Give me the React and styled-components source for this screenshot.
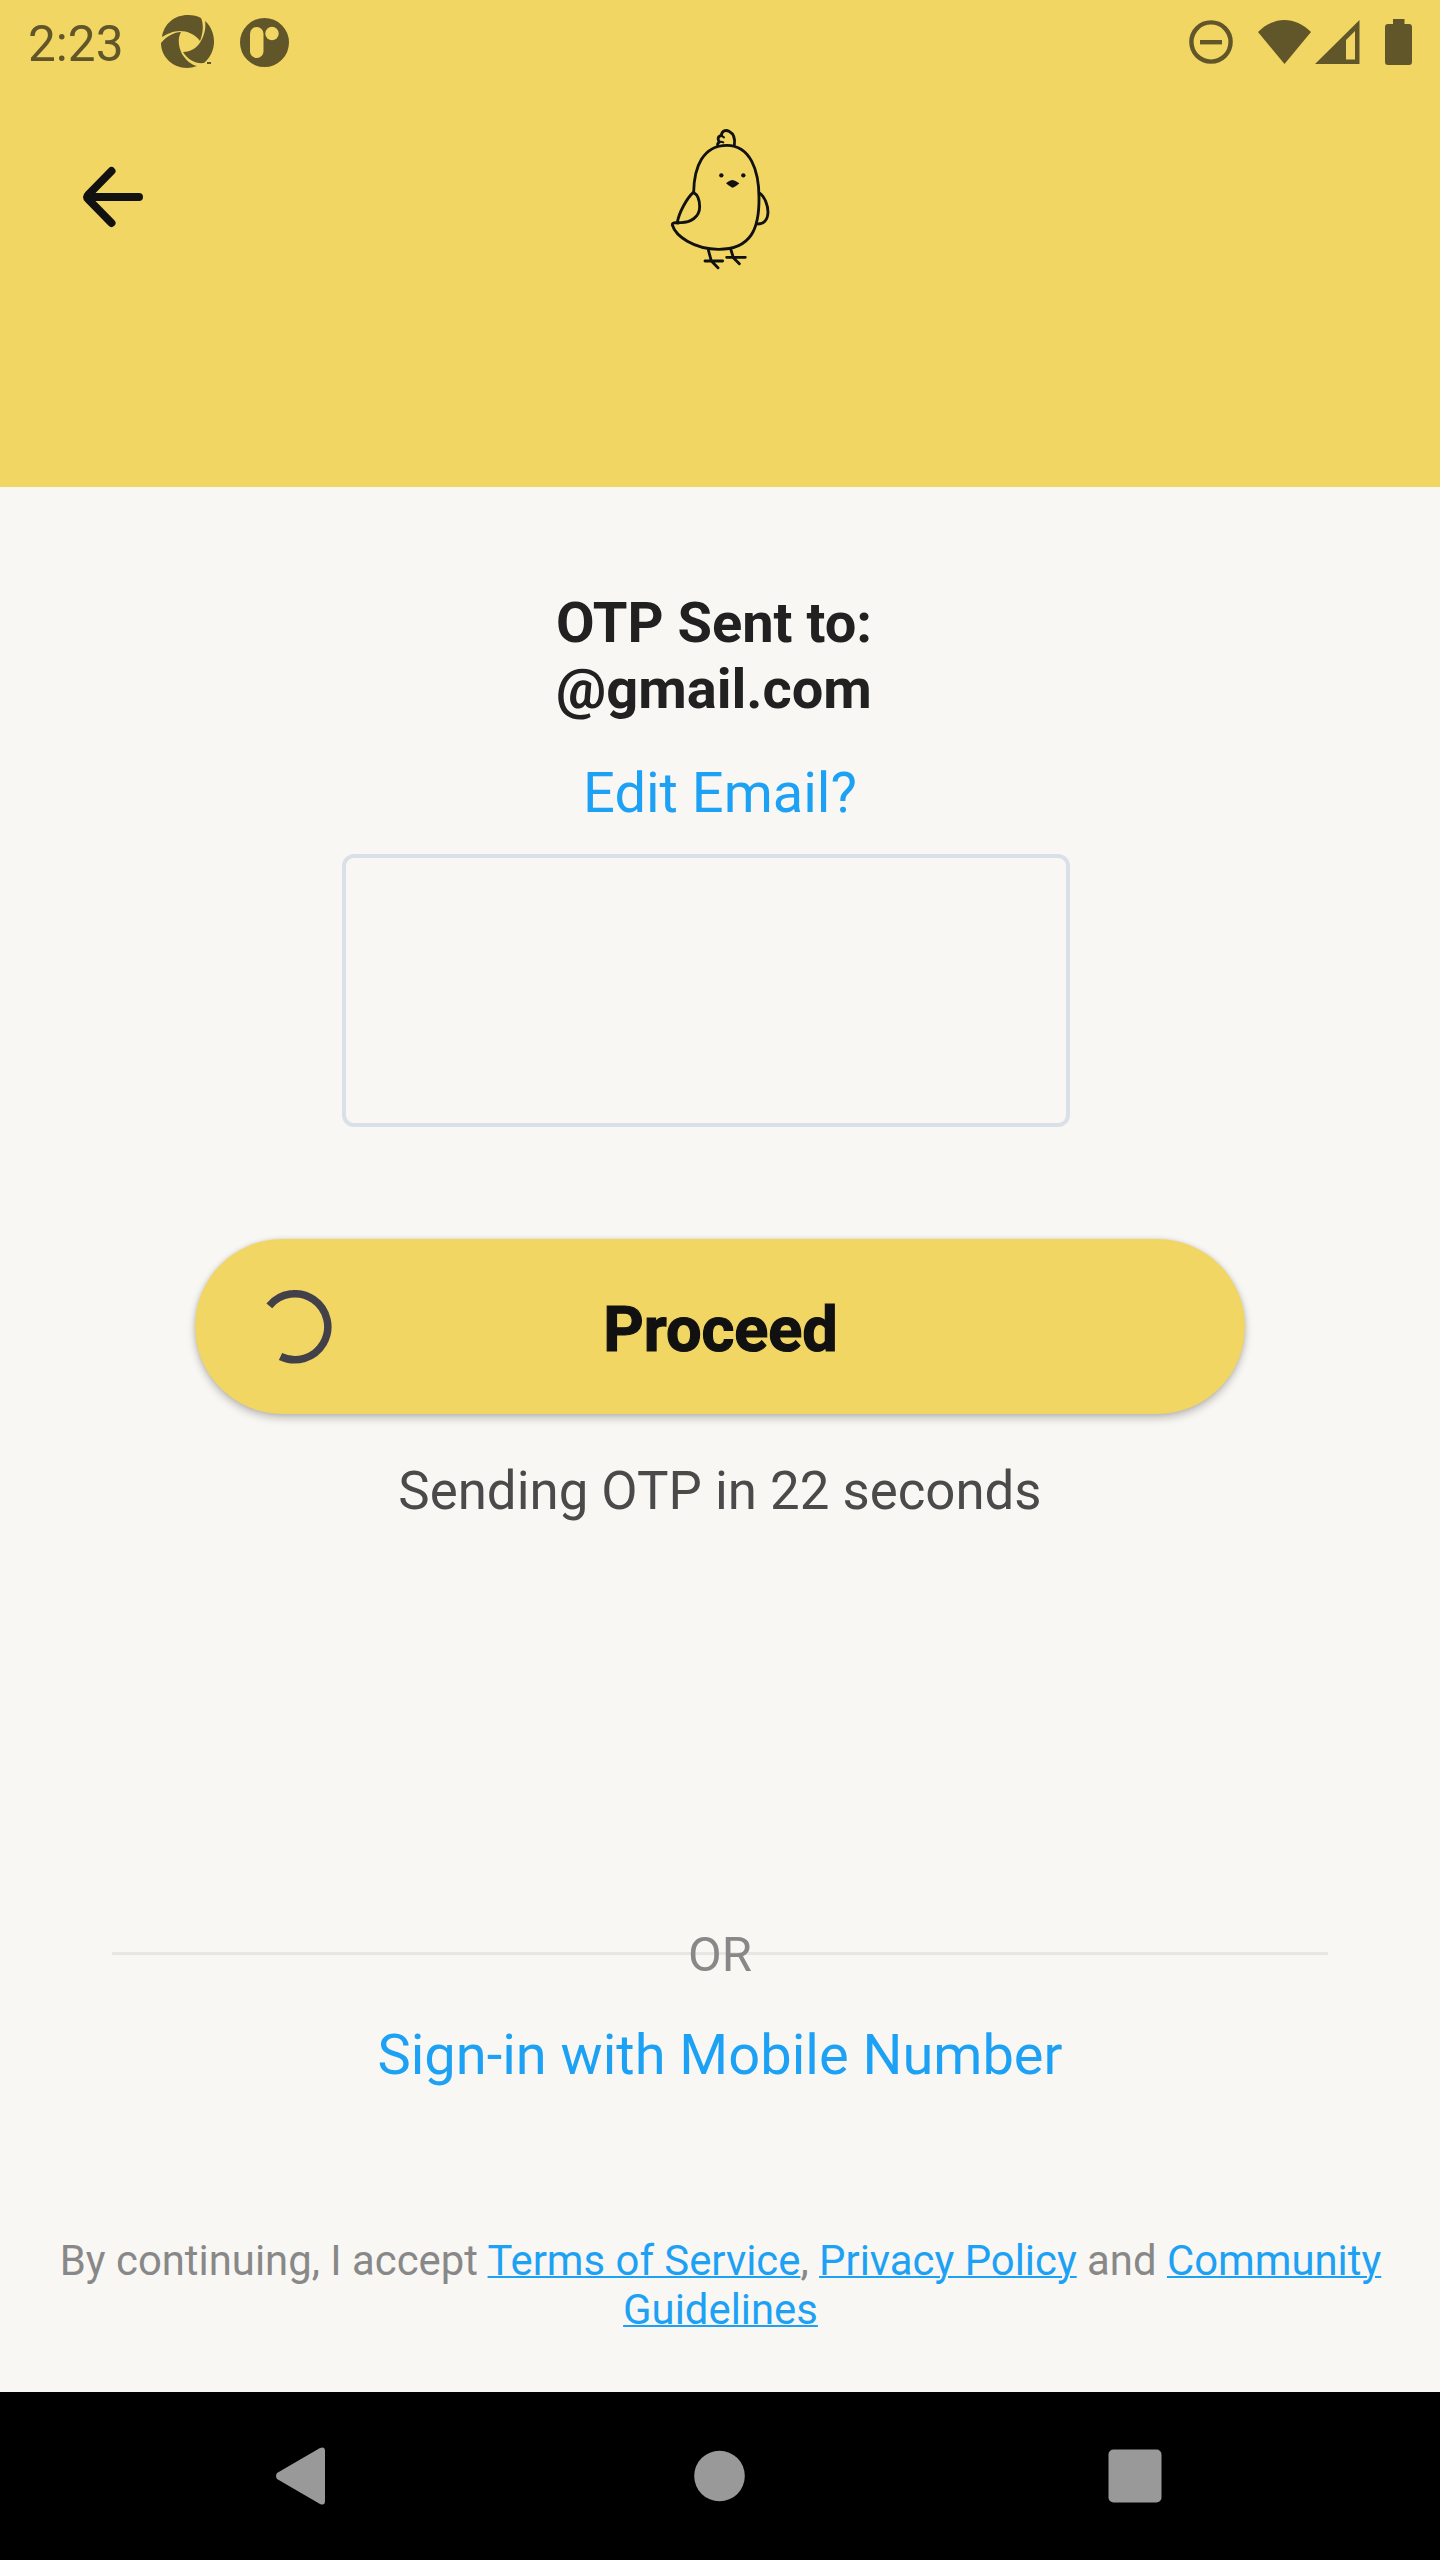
import React from "react";
import styled, { createGlobalStyle } from "styled-components";

const Global = createGlobalStyle`
  * { box-sizing: border-box; }
  body { margin: 0; background: #f8f7f3; font-family: Roboto, "Liberation Sans", sans-serif; }
  button { border: 0; padding: 0; background: none; font: inherit; color: inherit; }
  svg { display: block; }
`;

const Screen = styled.div`
  width: 1440px;
  height: 2560px;
  display: flex;
  flex-direction: column;
  overflow: hidden;
  background: #f8f7f3;
`;

const Header = styled.header`
  height: 487px;
  flex: none;
  background: #f1d663;
`;

const StatusBar = styled.div`
  height: 84px;
  display: flex;
  align-items: center;
  justify-content: space-between;
  padding: 0 28px;
  color: #615629;
`;

const StatusGroup = styled.div`
  display: flex;
  align-items: center;
`;

const Clock = styled.span`
  width: 133px;
  font-size: 49.5px;
  line-height: 60px;
  padding-top: 4px;
`;

const StatusIcon = styled.span`
  margin-left: ${(p) => p.$gap}px;
`;

const AppBar = styled.div`
  display: grid;
  grid-template-columns: 1fr auto 1fr;
  height: 225px;
`;

const BackButton = styled.button`
  justify-self: start;
  align-self: start;
  margin: 80px 0 0 80px;
`;

const ChickSlot = styled.div`
  padding-top: 31px;
`;

const Main = styled.main`
  flex: 1;
  display: flex;
  flex-direction: column;
  align-items: center;
`;

const SentTo = styled.h1`
  margin: 103px 12px 0 0;
  font-size: 56px;
  line-height: 66px;
  font-weight: 700;
  color: #212121;
`;

const TextLink = styled.button`
  margin-top: ${(p) => p.$top}px;
  font-size: 56px;
  line-height: 66px;
  color: #1da1f5;
`;

const OtpField = styled.input`
  width: 728px;
  height: 273px;
  margin: 28px 28px 0 0;
  border: 4px solid #d9e0e7;
  border-radius: 12px;
  background: transparent;
  outline: none;
`;

const Proceed = styled.button`
  width: 1050px;
  height: 175px;
  margin-top: 112px;
  display: grid;
  grid-template-columns: 1fr auto 1fr;
  align-items: center;
  border-radius: 88px;
  background: #f1d663;
  box-shadow: 0 4px 8px rgba(0, 0, 0, 0.24), 0 0 4px rgba(0, 0, 0, 0.1);
  font-size: 63px;
  font-weight: 700;
  color: #111;
`;

const SpinnerSlot = styled.span`
  padding-left: 63px;
`;

const ProceedLabel = styled.span`
  padding: 6px 0 0 1px;
  -webkit-text-stroke: 1.2px #111;
`;

const Countdown = styled.p`
  margin: 45px 0 0;
  font-size: 52.8px;
  line-height: 64px;
  color: #4a4a4a;
`;

const Divider = styled.div`
  width: 1216px;
  margin-top: 403px;
  display: grid;
  justify-items: center;
  align-items: center;
  color: #888;
  font-size: 49px;
  line-height: 58px;
`;

const Rule = styled.span`
  grid-area: 1 / 1;
  width: 100%;
  height: 3px;
  margin-bottom: 3px;
  background: #e7e7e2;
`;

const DividerLabel = styled.span`
  grid-area: 1 / 1;
`;

const Legal = styled.p`
  width: 1340px;
  margin: 148px 0 0 1px;
  text-align: center;
  font-size: 41.85px;
  line-height: 49px;
  color: #888;
`;

const LegalLink = styled.a`
  color: #1da1f5;
  text-decoration: underline;
  text-decoration-thickness: 2px;
`;

const NavBar = styled.nav`
  height: 168px;
  flex: none;
  display: flex;
  align-items: center;
  justify-content: space-between;
  padding: 0 278px 0 275px;
  background: #000;
`;

const PinwheelIcon = () => (
  <svg width="54" height="54" viewBox="0 0 54 54" fill="currentColor">
    <path d="M1 22C3 9 13 0 27 0C32 0 37 1 40 3C43 9 42 19 39 26C34 19 26 16 19 16C12 16 6 19 1 22Z" />
    <path d="M0 28C6 21 13 17 20 17C16 24 18 33 21 39C25 45 30 50 36 51C18 58 0 45 0 28Z" />
    <path d="M22 37C31 37 38 31 41 24C44 18 45 11 44 6C50 11 53 19 53 27C53 35 49 43 43 48C35 49 27 45 22 37Z" />
    <path d="M46 47h4v2h-4z" />
  </svg>
);

const RoundLogoIcon = () => (
  <svg width="49" height="49" viewBox="0 0 49 49">
    <circle cx="24.5" cy="24.5" r="24.5" fill="#615629" />
    <rect x="10" y="9" width="13.5" height="31" rx="6.7" fill="#f1d663" />
    <circle cx="32" cy="15.5" r="6.7" fill="#f1d663" />
  </svg>
);

const DndIcon = () => (
  <svg width="44" height="45" viewBox="0 0 44 45" fill="none" stroke="currentColor" strokeWidth="4.4">
    <circle cx="22" cy="22" r="19.6" />
    <path d="M11 22.200H33" />
  </svg>
);

const WifiIcon = () => (
  <svg width="53" height="45" viewBox="0 0 53 45" fill="currentColor">
    <path d="M0 12C16 -4 37 -4 53 12L26.5 44Z" />
  </svg>
);

const SignalIcon = () => (
  <svg width="45" height="45" viewBox="0 0 45 45" fill="currentColor" fillRule="evenodd">
    <path d="M0 44L44.5 0V44ZM31 20V39.500H40V11Z" />
  </svg>
);

const BatteryIcon = () => (
  <svg width="27" height="46" viewBox="0 0 27 46" fill="currentColor">
    <path d="M8 0H19.500V5H24Q27 5 27 8V43Q27 46 24 46H3Q0 46 0 43V8Q0 5 3 5H8Z" />
  </svg>
);

const BackArrow = () => (
  <svg width="66" height="66" viewBox="0 0 66 66" fill="none" stroke="#111" strokeWidth="8" strokeLinecap="round" strokeLinejoin="round">
    <path d="M59 33H9M31.500 7L8.500 30.500Q6 33 8.500 35.500L31.500 59" />
  </svg>
);

const Chick = () => (
  <svg width="140" height="165" viewBox="-1 -1 420 495" fill="none" stroke="#111" strokeWidth="8.5" strokeLinecap="round" strokeLinejoin="round">
    <path d="M130 231C131 155 158 90 230 90C300 91 326 165 326 247C327 340 302 402 205 402C130 402 76 362 66 329C65 321 76 322 84 323" />
    <path d="M129 231C110 248 86 291 81 321C122 326 148 303 148 274C148 255 141 238 129 231Z" />
    <path d="M328 234C343 243 353 270 353 291C352 315 339 326 323 326" />
    <path d="M202 90C201 86 204 82 207 80C201 73 202 62 213 61C214 45 227 43 236 48C249 55 255 71 252 90" />
    <path d="M207 80Q213 78 219 81M213 61L221 66" strokeWidth="6" />
    <path d="M174 404L183 437L203 457M164 437H217M242 404L249 427L267 445M229 426H285" />
    <circle cx="213" cy="180" r="6.5" fill="#111" stroke="none" />
    <circle cx="279" cy="180" r="6.5" fill="#111" stroke="none" />
    <path d="M227 204Q240 194 247 194Q254 195 267 204Q252 217 247 217Q241 216 227 204Z" fill="#111" stroke="none" />
  </svg>
);

const Spinner = () => (
  <svg width="74" height="74" viewBox="0 0 74 74" fill="none" stroke="#424149" strokeWidth="7.500">
    <path d="M11.300 15.800A33 33 0 1 1 22.500 66.500" />
  </svg>
);

const BackTriangle = () => (
  <svg width="52" height="58" viewBox="0 0 52 58" fill="#999">
    <path d="M2 26L45 1Q50 -1 50 4V54Q50 59 45 57L2 32Q0 29 2 26Z" />
  </svg>
);

const HomeCircle = () => (
  <svg width="54" height="52" viewBox="0 0 54 52" fill="#999">
    <circle cx="28.500" cy="26" r="25.300" />
  </svg>
);

const RecentsSquare = () => (
  <svg width="54" height="54" viewBox="0 0 54 54" fill="#999">
    <rect width="53" height="53" x=".5" y=".5" rx="5" />
  </svg>
);

export default function App() {
  return (
    <Screen>
      <Global />
      <Header>
        <StatusBar>
          <StatusGroup>
            <Clock>2:23</Clock>
            <StatusIcon $gap={0}><PinwheelIcon /></StatusIcon>
            <StatusIcon $gap={25}><RoundLogoIcon /></StatusIcon>
          </StatusGroup>
          <StatusGroup>
            <StatusIcon $gap={0}><DndIcon /></StatusIcon>
            <StatusIcon $gap={25}><WifiIcon /></StatusIcon>
            <StatusIcon $gap={4}><SignalIcon /></StatusIcon>
            <StatusIcon $gap={25}><BatteryIcon /></StatusIcon>
          </StatusGroup>
        </StatusBar>
        <AppBar>
          <BackButton aria-label="Back"><BackArrow /></BackButton>
          <ChickSlot><Chick /></ChickSlot>
        </AppBar>
      </Header>
      <Main>
        <SentTo>OTP Sent to:<br />@gmail.com</SentTo>
        <TextLink $top={38}>Edit Email?</TextLink>
        <OtpField aria-label="OTP" />
        <Proceed>
          <SpinnerSlot><Spinner /></SpinnerSlot>
          <ProceedLabel>Proceed</ProceedLabel>
        </Proceed>
        <Countdown>Sending OTP in 22 seconds</Countdown>
        <Divider>
          <Rule />
          <DividerLabel>OR</DividerLabel>
        </Divider>
        <TextLink $top={38}>Sign-in with Mobile Number</TextLink>
        <Legal>
          By continuing, I accept <LegalLink>Terms of Service</LegalLink>, <LegalLink>Privacy Policy</LegalLink> and <LegalLink>Community Guidelines</LegalLink>
        </Legal>
      </Main>
      <NavBar>
        <BackTriangle />
        <HomeCircle />
        <RecentsSquare />
      </NavBar>
    </Screen>
  );
}
